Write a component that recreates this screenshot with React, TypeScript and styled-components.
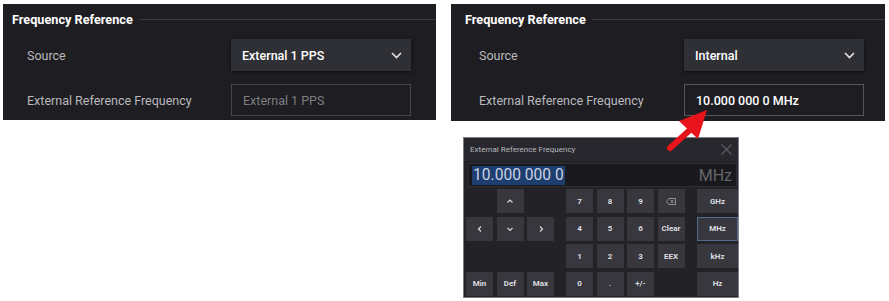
import React from "react";
import styled, { createGlobalStyle } from "styled-components";

const Global = createGlobalStyle`
  html, body { margin: 0; padding: 0; background: #ffffff; }
  body { font-family: Roboto, "Liberation Sans", Arial, sans-serif; }
`;

const Page = styled.div`
  display: flex;
  align-items: flex-start;
  gap: 15px;
  padding: 4px 0 0 3px;
  width: 889px;
  height: 301px;
  box-sizing: border-box;
`;

const Column = styled.div`
  position: relative;
  display: flex;
  flex-direction: column;
  width: 434px;
`;

const Panel = styled.section<{ $h: number; $w: number }>`
  width: ${(p) => p.$w}px;
  height: ${(p) => p.$h}px;
  background: #1d1d22;
  display: flex;
  flex-direction: column;
  box-sizing: border-box;
  padding-top: 8px;
`;

const Header = styled.div<{ $pad: number }>`
  display: flex;
  align-items: center;
  height: 14px;
  padding-left: ${(p) => p.$pad}px;
`;

const Title = styled.span`
  color: #ffffff;
  font-size: 12.7px;
  font-weight: 700;
  white-space: nowrap;
`;

const Rule = styled.div`
  flex: 1;
  height: 1px;
  background: #3a3a41;
  margin-left: 6px;
`;

const Row = styled.div<{ $pad: number; $label: number }>`
  display: grid;
  grid-template-columns: ${(p) => p.$label}px 180px;
  align-items: center;
  padding-left: ${(p) => p.$pad}px;
  height: 32px;
  margin-top: 13px;
`;

const Label = styled.span`
  color: #b9b9bd;
  font-size: 12.5px;
  white-space: nowrap;
`;

const Select = styled.div`
  height: 32px;
  box-sizing: border-box;
  background: #2f2f36;
  box-shadow: 0 1px 3px rgba(0, 0, 0, 0.6);
  display: flex;
  align-items: center;
  justify-content: space-between;
  padding: 0 9px 0 11px;
  color: #ffffff;
  font-size: 12.5px;
  font-weight: 500;
`;

const Field = styled.div<{ $dim?: boolean }>`
  height: 32px;
  box-sizing: border-box;
  border: 1px solid ${(p) => (p.$dim ? "#45454b" : "#55555b")};
  display: flex;
  align-items: center;
  padding-left: 11px;
  color: ${(p) => (p.$dim ? "#7d7d82" : "#ffffff")};
  font-size: 12.5px;
  font-weight: ${(p) => (p.$dim ? 400 : 500)};
`;

const Chevron = () => (
  <svg width="11" height="7" viewBox="0 0 11 7">
    <polyline points="1,1 5.5,5.5 10,1" fill="none" stroke="#e6e6e6" strokeWidth="1.6" />
  </svg>
);

const ArrowSvg = styled.svg`
  position: absolute;
  left: 216px;
  top: 104px;
  overflow: visible;
`;

const Keypad = styled.div`
  margin: 16px 0 0 12px;
  width: 276px;
  height: 161px;
  box-sizing: border-box;
  border: 1px solid #7b8089;
  background: #222227;
  display: flex;
  flex-direction: column;
`;

const KTitleBar = styled.div`
  height: 23px;
  background: #27272d;
  display: flex;
  align-items: center;
  justify-content: space-between;
  padding: 0 6px 0 6px;
  color: #b8b8bc;
  font-size: 8px;
`;

const KInput = styled.div`
  margin: 2px 1px 0 4px;
  height: 24px;
  background: #19191d;
  border: 1px solid #2e2e34;
  display: flex;
  align-items: center;
  justify-content: space-between;
  padding: 0 4px 0 3px;
  box-sizing: border-box;
`;

const Selected = styled.span`
  background: #1f3e70;
  color: #c9d2e2;
  font-size: 15.6px;
  line-height: 19px;
  padding: 0 1px;
`;

const Unit = styled.span`
  color: #65656b;
  font-size: 16px;
`;

const KGrid = styled.div`
  display: grid;
  grid-template-columns: 27px 27px 27px 5px 27px 27px 27px 27px 5.5px 41px;
  grid-auto-rows: 24px;
  column-gap: 3.5px;
  row-gap: 3.6px;
  padding: 2px 0 0 2px;
`;

const Key = styled.div<{ $col: number; $row: number; $active?: boolean }>`
  grid-column: ${(p) => p.$col};
  grid-row: ${(p) => p.$row};
  background: #37373d;
  border: 1px solid ${(p) => (p.$active ? "#4e6c8e" : "transparent")};
  box-sizing: border-box;
  display: flex;
  align-items: center;
  justify-content: center;
  color: #dcdce0;
  font-size: 8px;
  font-weight: 700;
`;

const ArrowGlyph = ({ d }: { d: string }) => (
  <svg width="8" height="8" viewBox="0 0 8 8">
    <polyline points={d} fill="none" stroke="#d8d8dc" strokeWidth="1.2" />
  </svg>
);

const Backspace = () => (
  <svg width="10" height="7" viewBox="0 0 10 7">
    <path d="M3 0.5 H9.5 V6.5 H3 L0.5 3.5 Z" fill="none" stroke="#a8a8ad" strokeWidth="0.8" />
    <path d="M4.8 2 L7.3 5 M7.3 2 L4.8 5" stroke="#a8a8ad" strokeWidth="0.8" />
  </svg>
);

const Close = () => (
  <svg width="11" height="11" viewBox="0 0 11 11">
    <path d="M0.5 0.5 L10.5 10.5 M10.5 0.5 L0.5 10.5" stroke="#5d5d63" strokeWidth="1.1" />
  </svg>
);

type K = { c: number; r: number; t: React.ReactNode; a?: boolean };
const keys: K[] = [
  { c: 2, r: 1, t: <ArrowGlyph d="1.5,5.5 4,3 6.5,5.5" /> },
  { c: 5, r: 1, t: "7" },
  { c: 6, r: 1, t: "8" },
  { c: 7, r: 1, t: "9" },
  { c: 8, r: 1, t: <Backspace /> },
  { c: 10, r: 1, t: "GHz" },
  { c: 1, r: 2, t: <ArrowGlyph d="5,1.5 2.5,4 5,6.5" /> },
  { c: 2, r: 2, t: <ArrowGlyph d="1.5,3 4,5.5 6.5,3" /> },
  { c: 3, r: 2, t: <ArrowGlyph d="3,1.5 5.5,4 3,6.5" /> },
  { c: 5, r: 2, t: "4" },
  { c: 6, r: 2, t: "5" },
  { c: 7, r: 2, t: "6" },
  { c: 8, r: 2, t: "Clear" },
  { c: 10, r: 2, t: "MHz", a: true },
  { c: 5, r: 3, t: "1" },
  { c: 6, r: 3, t: "2" },
  { c: 7, r: 3, t: "3" },
  { c: 8, r: 3, t: "EEX" },
  { c: 10, r: 3, t: "kHz" },
  { c: 1, r: 4, t: "Min" },
  { c: 2, r: 4, t: "Def" },
  { c: 3, r: 4, t: "Max" },
  { c: 5, r: 4, t: "0" },
  { c: 6, r: 4, t: "." },
  { c: 7, r: 4, t: "+/-" },
  { c: 10, r: 4, t: "Hz" },
];

export default function App() {
  return (
    <>
      <Global />
      <Page>
        <Panel $w={433} $h={116}>
          <Header $pad={9}>
            <Title>Frequency Reference</Title>
            <Rule />
          </Header>
          <Row $pad={24} $label={204}>
            <Label>Source</Label>
            <Select>
              External 1 PPS
              <Chevron />
            </Select>
          </Row>
          <Row $pad={24} $label={204}>
            <Label>External Reference Frequency</Label>
            <Field $dim>External 1 PPS</Field>
          </Row>
        </Panel>
        <Column>
          <Panel $w={434} $h={117}>
            <Header $pad={14}>
              <Title>Frequency Reference</Title>
              <Rule />
            </Header>
            <Row $pad={28} $label={205}>
              <Label>Source</Label>
              <Select>
                Internal
                <Chevron />
              </Select>
            </Row>
            <Row $pad={28} $label={205}>
              <Label>External Reference Frequency</Label>
              <Field>10.000 000 0 MHz</Field>
            </Row>
          </Panel>
          <ArrowSvg width="44" height="44" viewBox="0 0 44 44">
            <line x1="3" y1="40" x2="24" y2="21" stroke="#e8141c" strokeWidth="6" strokeLinecap="round" />
            <polygon points="40,2 12,13 31,31" fill="#e8141c" />
          </ArrowSvg>
          <Keypad>
            <KTitleBar>
              External Reference Frequency
              <Close />
            </KTitleBar>
            <KInput>
              <Selected>10.000 000 0</Selected>
              <Unit>MHz</Unit>
            </KInput>
            <KGrid>
              {keys.map((k, i) => (
                <Key key={i} $col={k.c} $row={k.r} $active={k.a}>
                  {k.t}
                </Key>
              ))}
            </KGrid>
          </Keypad>
        </Column>
      </Page>
    </>
  );
}
